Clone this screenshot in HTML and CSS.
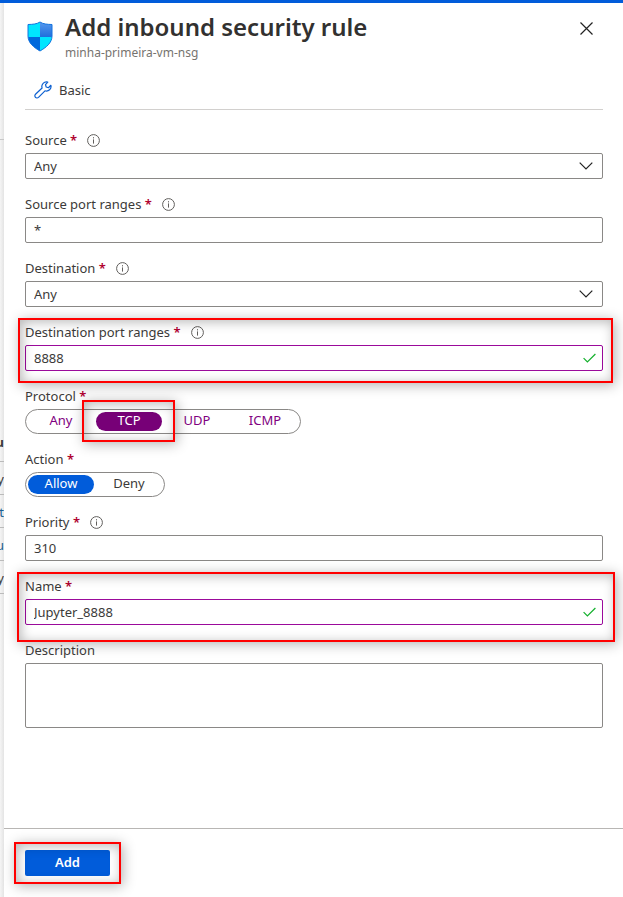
FILE: index.html
```html
<!DOCTYPE html>
<html lang="en">
<head>
<meta charset="utf-8">
<meta name="viewport" content="width=device-width, initial-scale=1">
<title>Add inbound security rule</title>
<link rel="stylesheet" href="styles.css">
</head>
<body>
<svg class="defs" aria-hidden="true">
  <symbol id="info" viewBox="0 0 13 13"><circle cx="6.5" cy="6.5" r="5.9" fill="none" stroke="#605e5c" stroke-width="1"/><path d="M6.5 5.4v4.2M6.5 3.2v1.2" stroke="#605e5c" stroke-width="1" fill="none"/></symbol>
  <symbol id="chevron" viewBox="0 0 14 8"><path d="M.7.7 7 7 13.3.7" fill="none" stroke="#222" stroke-width="1.2"/></symbol>
  <symbol id="check" viewBox="0 0 13 10"><path d="M.6 5.2 4.4 9 12.4 1" fill="none" stroke="#13b02c" stroke-width="1.2"/></symbol>
</svg>
<div class="portal">
  <div class="backdrop" aria-hidden="true">
    <div class="toolbar"></div>
    <div class="row head"><b>u</b></div>
    <div class="row"><span>y</span></div>
    <div class="row"><span class="link">t</span></div>
    <div class="row"><span class="link">u</span></div>
    <div class="row"><span>y</span></div>
  </div>
  <main class="panel">
    <header class="header">
      <svg class="shield" viewBox="0 0 26 31" aria-hidden="true">
        <defs>
          <clipPath id="shape"><path d="M13 1C16 3 20 3.400 25 3.500V15C25 22 19 26.500 13 30C7 26.500 1 22 1 15V3.500C6 3.400 10 3 13 1Z"/></clipPath>
          <linearGradient id="tone" x1="0" y1="0" x2="0" y2="1"><stop offset="0" stop-color="#5a9bef"/><stop offset="1" stop-color="#1f6fdc"/></linearGradient>
        </defs>
        <g clip-path="url(#shape)">
          <path fill="#00e5ff" d="M0 0h13v16H0zM13 16h13v15H13z"/>
          <path fill="url(#tone)" d="M13 0h13v16H13z"/>
          <path fill="#0069dc" d="M0 16h13v15H0z"/>
        </g>
        <path d="M13 1C16 3 20 3.400 25 3.500V15C25 22 19 26.500 13 30C7 26.500 1 22 1 15V3.500C6 3.400 10 3 13 1Z" fill="none" stroke="#1473df" stroke-width="1"/>
      </svg>
      <div class="titles">
        <h1>Add inbound security rule</h1>
        <p>minha-primeira-vm-nsg</p>
      </div>
      <button class="close" type="button" aria-label="Close"><svg viewBox="0 0 13 13"><path d="M.5.5l12 12M12.500.5l-12 12" stroke="#222" stroke-width="1.200"/></svg></button>
    </header>
    <div class="commands">
      <button class="basic" type="button">
        <svg viewBox="0 0 18 18" aria-hidden="true"><path d="M13.800 1.100A4.600 4.600 0 0 0 8.100 7L1.500 13.300A2 2 0 0 0 4.500 16.400L11 9.800A4.600 4.600 0 0 0 16.900 4.300L14.400 6.700 12.200 6 11.500 3.600Z" fill="none" stroke="#0b5fd0" stroke-width="1.200" stroke-linejoin="round"/></svg>
        Basic
      </button>
    </div>
    <form class="form" id="rule">
      <div class="field">
        <div class="caption"><label for="source">Source <i>*</i></label><svg class="info"><use href="#info"/></svg></div>
        <div class="control"><select id="source"><option>Any</option></select><svg class="chevron"><use href="#chevron"/></svg></div>
      </div>
      <div class="field">
        <div class="caption"><label for="sports">Source port ranges <i>*</i></label><svg class="info"><use href="#info"/></svg></div>
        <div class="control"><input id="sports" type="text" value="*"></div>
      </div>
      <div class="field">
        <div class="caption"><label for="dest">Destination <i>*</i></label><svg class="info"><use href="#info"/></svg></div>
        <div class="control"><select id="dest"><option>Any</option></select><svg class="chevron"><use href="#chevron"/></svg></div>
      </div>
      <div class="field marked ports">
        <div class="caption"><label for="dports">Destination port ranges <i>*</i></label><svg class="info"><use href="#info"/></svg></div>
        <div class="control"><input class="valid" id="dports" type="text" value="8888"><svg class="check"><use href="#check"/></svg></div>
      </div>
      <fieldset class="field">
        <legend class="caption">Protocol&nbsp;<i>*</i></legend>
        <div class="pills edited">
          <label><input type="radio" name="protocol"><span>Any</span></label>
          <label class="marked tcp"><input type="radio" name="protocol" checked><span>TCP</span></label>
          <label><input type="radio" name="protocol"><span>UDP</span></label>
          <label><input type="radio" name="protocol"><span>ICMP</span></label>
        </div>
      </fieldset>
      <fieldset class="field">
        <legend class="caption">Action&nbsp;<i>*</i></legend>
        <div class="pills">
          <label><input type="radio" name="action" checked><span>Allow</span></label>
          <label><input type="radio" name="action"><span>Deny</span></label>
        </div>
      </fieldset>
      <div class="field">
        <div class="caption"><label for="priority">Priority <i>*</i></label><svg class="info"><use href="#info"/></svg></div>
        <div class="control"><input id="priority" type="text" value="310"></div>
      </div>
      <div class="field marked name">
        <div class="caption"><label for="name">Name <i>*</i></label></div>
        <div class="control"><input class="valid" id="name" type="text" value="Jupyter_8888"><svg class="check"><use href="#check"/></svg></div>
      </div>
      <div class="field">
        <div class="caption"><label for="description">Description</label></div>
        <textarea id="description"></textarea>
      </div>
    </form>
    <footer class="footer">
      <div class="marked submit"><button class="add" type="submit" form="rule">Add</button></div>
    </footer>
  </main>
</div>
</body>
</html>
```
FILE: styles.css
```css
* { box-sizing: border-box; }
body {
  margin: 0;
  color: #3b3a39;
  background: #fff;
  font: 13px/18px "Noto Sans", "Open Sans", sans-serif;
}
button, input, select, textarea { font: inherit; color: inherit; }
.defs { position: absolute; width: 0; height: 0; }
.portal {
  display: flex;
  min-height: 100vh;
  border-top: 3px solid #015cda;
}
.backdrop {
  width: 4px;
  flex: none;
  overflow: hidden;
  background: linear-gradient(90deg, #f5f5f5, #e4e4e4);
}
.toolbar { height: 137px; border-bottom: 1px solid #c8c8c8; }
.row {
  display: flex;
  justify-content: flex-end;
  height: 33px;
  padding-top: 8px;
  border-bottom: 1px solid #bbb;
}
.row.head { height: 322px; padding-top: 293px; }
.link { color: #1b5f91; }
.panel {
  flex: 1;
  min-width: 0;
  display: flex;
  flex-direction: column;
}
.header {
  display: flex;
  align-items: flex-start;
  padding: 8px 30px 0 23px;
}
.shield { width: 26px; height: 31px; margin: 10px 12px 0 0; }
.titles { flex: 1; }
h1 { margin: 0; font-size: 24px; line-height: 32px; font-weight: 600; color: #323130; }
.titles p { margin: 0; font-size: 12px; line-height: 20px; color: #76736f; }
.close { padding: 0; margin-top: 11px; border: 0; background: none; }
.close svg { display: block; width: 13px; height: 13px; }
.commands {
  margin: 8px 20px 0 21px;
  padding: 8px 9px;
  border-bottom: 1px solid #d2d0ce;
}
.basic {
  display: flex;
  align-items: center;
  gap: 7px;
  height: 22px;
  padding: 0;
  border: 0;
  background: none;
}
.basic svg { width: 18px; height: 18px; }
.form {
  flex: 1;
  display: flex;
  flex-direction: column;
  gap: 12px;
  padding: 17px 20px 0 21px;
}
.field { position: relative; min-width: 0; margin: 0; padding: 0; border: 0; }
.caption {
  display: flex;
  align-items: center;
  gap: 10px;
  height: 26px;
  padding: 0;
}
legend.caption { gap: 0; }
i { color: #b0002f; font-style: normal; font-weight: 600; }
.info { width: 13px; height: 13px; }
.control { position: relative; }
input[type="text"], select, textarea {
  display: block;
  width: 100%;
  height: 26px;
  padding: 0 8px 1px;
  border: 1px solid #8a8886;
  border-radius: 2px;
  background: #fff;
  appearance: none;
  outline: 0;
}
input.valid { border-color: #9b0a9b; }
textarea { height: 65px; resize: none; }
.chevron, .check { position: absolute; pointer-events: none; }
.chevron { width: 14px; height: 8px; right: 10px; top: 9px; }
.check { width: 13px; height: 10px; right: 7px; top: 8px; }
.pills {
  display: inline-flex;
  gap: 2px;
  height: 25px;
  padding: 2px;
  border: 1px solid #8a8886;
  border-radius: 13px;
  vertical-align: top;
}
.pills label { position: relative; width: 66px; }
.pills input { position: absolute; opacity: 0; margin: 0; }
.pills span {
  display: block;
  height: 19px;
  line-height: 17px;
  border-radius: 10px;
  text-align: center;
}
.pills :checked + span { background: #015cda; color: #fff; }
.edited span { color: #800080; }
.edited :checked + span { background: #770077; }
.marked { position: relative; }
.marked::after {
  content: "";
  position: absolute;
  border: 2px solid #ff0000;
  box-shadow: 2px 2px 12px rgba(0, 0, 0, .3), inset 2px 2px 12px rgba(0, 0, 0, .28);
  pointer-events: none;
}
.ports::after { inset: -1px -10px -12px -7px; }
.name::after { inset: -1px -12px -17px -8px; }
.tcp::after { inset: -12px -13px -11px -14px; z-index: 1; }
.submit::after { inset: -8px -11px -8px -11px; }
.footer {
  display: flex;
  height: 69px;
  padding: 21px;
  border-top: 1px solid #b8b6b4;
}
.add {
  width: 85px;
  height: 26px;
  padding: 0 0 3px;
  border: 0;
  border-radius: 2px;
  background: #015cda;
  color: #fff;
  font-weight: 600;
}
```
